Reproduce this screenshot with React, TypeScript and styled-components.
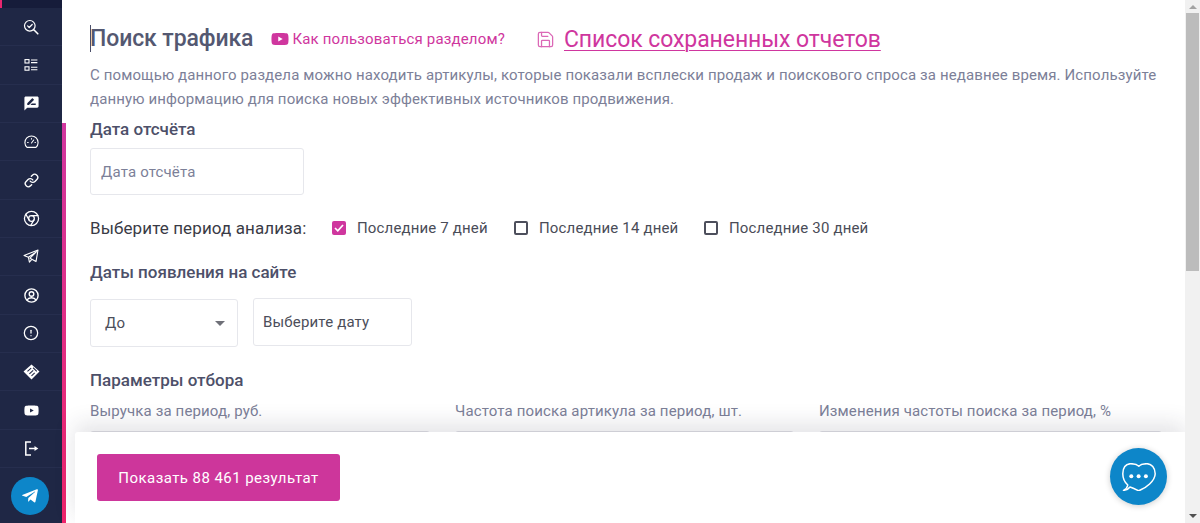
import React from "react";
import styled, { createGlobalStyle } from "styled-components";
import { FaTelegramPlane, FaYoutube } from "react-icons/fa";
import { MdRateReview } from "react-icons/md";
import { LuChrome, LuLink, LuSave, LuCircleAlert } from "react-icons/lu";

const Global = createGlobalStyle`
  html, body { margin: 0; padding: 0; height: 100%; overflow: hidden; background: #fff; }
  #root { height: 100%; }
  * { box-sizing: border-box; }
  body { font-family: Roboto, "Liberation Sans", sans-serif; }
`;

const Page = styled.div`
  position: relative;
  display: flex;
  width: 1200px;
  height: 523px;
  overflow: hidden;
`;
const Sidebar = styled.nav`
  width: 62px;
  flex: none;
  background: #1f2745;
  display: flex;
  flex-direction: column;
`;
const SideTop = styled.div`
  height: 8px;
  background: #161c3a;
  border-left: 2px solid #e8266f;
`;
const SideRow = styled.div`
  height: 38.35px;
  flex: none;
  display: flex;
  align-items: center;
  justify-content: center;
  color: #fff;
  border-bottom: 1px solid #262e4e;
  & > svg { display: block; }
`;
const TelegramRound = styled.div`
  width: 38px;
  height: 38px;
  border-radius: 50%;
  margin: 9px 0 0 11px;
  background: #0d86c9;
  display: flex;
  align-items: center;
  justify-content: center;
  color: #fff;
`;
const Accent = styled.div`
  width: 4px;
  flex: none;
  margin-top: 123px;
  background: linear-gradient(180deg, #d0369f 0%, #f0246b 100%);
`;
const Main = styled.main`
  flex: 1;
  min-width: 0;
  padding: 0 24px 0 24px;
  background: #fff;
`;
const TitleRow = styled.div`
  display: flex;
  align-items: center;
  height: 56px;
  padding-top: 22px;
`;
const Title = styled.h1`
  position: relative;
  margin: 0;
  font-size: 23px;
  line-height: 28px;
  font-weight: 500;
  letter-spacing: -0.1px;
  color: #545871;
  &::before {
    content: "";
    position: absolute;
    left: 0;
    top: 0;
    height: 27px;
    width: 1px;
    background: #4a4e69;
  }
`;
const Help = styled.a`
  display: flex;
  align-items: center;
  margin-left: 18px;
  color: #cf369e;
  font-size: 15px;
  font-weight: 400;
  letter-spacing: 0.17px;
  gap: 3px;
`;
const Reports = styled.a`
  display: flex;
  align-items: center;
  margin-left: 31px;
  color: #cf369e;
  font-size: 23px;
  letter-spacing: -0.08px;
  gap: 9px;
  span { text-decoration: underline; text-underline-offset: 3px; text-decoration-thickness: 1px; }
  svg { opacity: 0.75; }
`;
const Desc = styled.p`
  margin: 7px 0 0;
  font-size: 15px;
  line-height: 24px;
  letter-spacing: 0.12px;
  color: #7c8098;
  width: 1075px;
`;
const SectionLabel = styled.div<{ $top: number }>`
  margin-top: ${(p) => p.$top}px;
  font-size: 17px;
  line-height: 22px;
  font-weight: 500;
  color: #4d5069;
`;
const TextBox = styled.div<{ $w: number; $h: number; $dark?: boolean; $pad: number }>`
  width: ${(p) => p.$w}px;
  height: ${(p) => p.$h}px;
  border: 1px solid #e6e7ec;
  border-radius: 3px;
  padding: 0 ${(p) => p.$pad}px;
  display: flex;
  align-items: center;
  justify-content: space-between;
  font-size: 15px;
  letter-spacing: 0.17px;
  color: ${(p) => (p.$dark ? "#4c4e5a" : "#7c8098")};
  background: #fff;
`;
const FirstBox = styled.div`
  margin-top: 8px;
`;
const PeriodRow = styled.div`
  display: flex;
  align-items: center;
  margin-top: 22px;
  height: 22px;
`;
const PeriodLabel = styled.span`
  width: 242px;
  font-size: 17px;
  color: #3a3b46;
  letter-spacing: 0.1px;
`;
const Check = styled.label<{ $w: number }>`
  display: flex;
  align-items: center;
  width: ${(p) => p.$w}px;
  gap: 11px;
  font-size: 15px;
  letter-spacing: 0.16px;
  color: #4a4c58;
`;
const Box = styled.span<{ $on?: boolean }>`
  width: 14px;
  height: 14px;
  flex: none;
  border-radius: 2px;
  border: ${(p) => (p.$on ? "none" : "2px solid #4d4f5c")};
  background: ${(p) => (p.$on ? "#cf369e" : "#fff")};
  display: flex;
  align-items: center;
  justify-content: center;
`;
const DatesRow = styled.div`
  display: flex;
  align-items: flex-start;
  gap: 15px;
  margin-top: 16px;
`;
const DateSlot = styled.div`
  margin-top: -1px;
`;
const Caret = styled.span`
  width: 0;
  height: 0;
  border-left: 5px solid transparent;
  border-right: 5px solid transparent;
  border-top: 5px solid #6f7078;
  margin-right: -2px;
`;
const Params = styled.div`
  display: grid;
  grid-template-columns: 340px 339px 343px;
  column-gap: 25px;
  margin-top: 10px;
`;
const ParamLabel = styled.div`
  font-size: 15px;
  line-height: 20px;
  letter-spacing: 0.14px;
  color: #7c8098;
  white-space: nowrap;
  height: 20px;
`;
const ParamInput = styled.div`
  margin-top: 10px;
  height: 48px;
  border: 1px solid #e0e1e5;
  border-radius: 3px;
`;
const BottomBar = styled.div`
  position: absolute;
  left: 75px;
  right: 15px;
  bottom: 0;
  height: 91px;
  background: #fff;
  border-radius: 3px 0 0 0;
  box-shadow: 0 -8px 22px rgba(40, 40, 60, 0.13);
  padding: 22px 0 0 22px;
`;
const ShowButton = styled.button`
  width: 243px;
  height: 47px;
  border: none;
  border-radius: 3px;
  background: #cd369b;
  color: #fff;
  font-family: inherit;
  font-size: 15px;
  font-weight: 400;
  letter-spacing: 0.44px;
`;
const Chat = styled.div`
  position: absolute;
  left: 1110px;
  top: 448px;
  width: 57px;
  height: 57px;
  border-radius: 50%;
  background: #0d86c9;
  box-shadow: 0 1px 6px rgba(0, 0, 0, 0.2);
  display: flex;
  align-items: center;
  justify-content: center;
`;
const Scrollbar = styled.div`
  width: 15px;
  flex: none;
  background: #f1f1f1;
  display: flex;
  flex-direction: column;
  align-items: center;
  position: relative;
  z-index: 2;
`;
const ArrowUp = styled.span`
  margin-top: 5px;
  width: 0;
  height: 0;
  border-left: 4px solid transparent;
  border-right: 4px solid transparent;
  border-bottom: 4px solid #a3a3a3;
`;
const Thumb = styled.div`
  margin-top: 4px;
  width: 13px;
  height: 258px;
  background: #bcbcbc;
`;
const ArrowDown = styled.span`
  margin-top: auto;
  margin-bottom: 5px;
  width: 0;
  height: 0;
  border-left: 4px solid transparent;
  border-right: 4px solid transparent;
  border-top: 4px solid #505050;
`;

const SearchCheck = () => (
  <svg width="16" height="16" viewBox="0 0 16 16" fill="none" stroke="#fff" strokeWidth="1.2" strokeLinecap="round" strokeLinejoin="round">
    <circle cx="6.8" cy="6.8" r="5.3" />
    <path d="M4.6 6.9l1.6 1.6 3-3" />
    <path d="M10.8 10.8l4 4" strokeWidth="1.6" />
  </svg>
);
const ListIcon = () => (
  <svg width="14" height="14" viewBox="0 0 14 14" fill="none" stroke="#fff" strokeWidth="1.1">
    <rect x="1" y="1.6" width="4" height="3.4" />
    <rect x="1" y="8.8" width="4" height="3.4" />
    <path d="M7 2h6.4M7 4.6h6.4M7 9.2h6.4M7 11.8h6.4" />
  </svg>
);
const Gauge = () => (
  <svg width="15" height="14" viewBox="0 0 15 14" fill="none" stroke="#fff" strokeWidth="1.1" strokeLinecap="round">
    <path d="M3 12.4A6.6 6.6 0 1 1 12 12.4Z" strokeLinejoin="round" />
    <path d="M7.5 8l2.2-3M3.6 7.5h.6M11 7.5h.4M7.5 3.6v.5" />
  </svg>
);
const PlaneOutline = () => (
  <svg width="16" height="15" viewBox="0 0 16 15" fill="none" stroke="#fff" strokeWidth="1.1" strokeLinejoin="round">
    <path d="M15 1L1 6.4l4.4 1.8L13.600 2.600 7 9.200l6 3.400L15 1Z" />
    <path d="M5.400 8.200l1 5 2.400-2.900" />
  </svg>
);
const UserCircle = () => (
  <svg width="15" height="15" viewBox="0 0 15 15" fill="none" stroke="#fff" strokeWidth="1.4">
    <circle cx="7.5" cy="7.5" r="6.6" />
    <circle cx="7.5" cy="6" r="2.3" />
    <path d="M3 12c1-1.800 2.600-2.300 4.500-2.300S11 10.200 12 12" />
  </svg>
);
const HandDiamond = () => (
  <svg width="17" height="16" viewBox="0 0 16 15">
    <path d="M8 .5L15.500 7 8 14.500.5 7Z" fill="#fff" />
    <path d="M4.200 7l3.500-3.200M6 9.200l3.600-3.300M8 11.200l3-2.800M9.500 3.500L13 7" stroke="#1f2745" strokeWidth="1" fill="none" />
  </svg>
);
const LogoutIcon = () => (
  <svg width="15" height="15" viewBox="0 0 15 15" fill="none" stroke="#fff" strokeWidth="1.5">
    <path d="M7 1H1.800v13H7" />
    <path d="M5 7.500h6" />
    <path d="M10.500 5l3.800 2.500-3.800 2.500Z" fill="#fff" stroke="none" />
  </svg>
);
const ChatHeart = () => (
  <svg width="34" height="28" viewBox="0 0 34 28" fill="none">
    <path d="M16.800 3.300C14.500 1 11.500.7 8.500.7 3.500.7.800 5 .8 10.700.8 15.500 3 19.500 5.800 22 5.500 24 4 26 1.500 27.300 4 27.300 6.500 26 8 24c3 1 6 2.500 8.700 3.800C24 25 33 18 33.200 10.700 33.200 5 29.500.7 25 .7c-3 0-6 .3-8.200 2.600Z" stroke="#fff" strokeWidth="1.5" strokeLinejoin="round" />
    <circle cx="9.300" cy="13.300" r="2" fill="#fff" />
    <circle cx="16.600" cy="13.300" r="2" fill="#fff" />
    <circle cx="23.900" cy="13.300" r="2" fill="#fff" />
  </svg>
);

const navIcons = [
  <SearchCheck />,
  <ListIcon />,
  <MdRateReview size={17} />,
  <Gauge />,
  <LuLink size={15} strokeWidth={2.2} />,
  <LuChrome size={17} strokeWidth={1.8} />,
  <PlaneOutline />,
  <UserCircle />,
  <LuCircleAlert size={16} strokeWidth={1.9} />,
  <HandDiamond />,
  <FaYoutube size={15} />,
  <LogoutIcon />,
];

const periods = [
  { label: "Последние 7 дней", on: true, w: 182 },
  { label: "Последние 14 дней", on: false, w: 190 },
  { label: "Последние 30 дней", on: false, w: 180 },
];
const params = [
  "Выручка за период, руб.",
  "Частота поиска артикула за период, шт.",
  "Изменения частоты поиска за период, %",
];

export default function App() {
  return (
    <Page>
      <Global />
      <Sidebar>
        <SideTop />
        {navIcons.map((icon, i) => (
          <SideRow key={i}>{icon}</SideRow>
        ))}
        <TelegramRound>
          <FaTelegramPlane size={18} />
        </TelegramRound>
      </Sidebar>
      <Accent />
      <Main>
        <TitleRow>
          <Title>Поиск трафика</Title>
          <Help>
            <FaYoutube size={18} />
            Как пользоваться разделом?
          </Help>
          <Reports>
            <LuSave size={19} strokeWidth={1.6} />
            <span>Список сохраненных отчетов</span>
          </Reports>
        </TitleRow>
        <Desc>
          С помощью данного раздела можно находить артикулы, которые показали всплески продаж и поискового спроса за недавнее время. Используйте данную информацию для поиска новых эффективных источников продвижения.
        </Desc>
        <SectionLabel $top={7}>Дата отсчёта</SectionLabel>
        <FirstBox>
          <TextBox $w={214} $h={47} $pad={10}>Дата отсчёта</TextBox>
        </FirstBox>
        <PeriodRow>
          <PeriodLabel>Выберите период анализа:</PeriodLabel>
          {periods.map((p) => (
            <Check key={p.label} $w={p.w}>
              <Box $on={p.on}>
                {p.on && (
                  <svg width="10" height="8" viewBox="0 0 10 8" fill="none" stroke="#fff" strokeWidth="1.700">
                    <path d="M1 4l2.800 2.800L9 1" />
                  </svg>
                )}
              </Box>
              {p.label}
            </Check>
          ))}
        </PeriodRow>
        <SectionLabel $top={22}>Даты появления на сайте</SectionLabel>
        <DatesRow>
          <TextBox $w={148} $h={48} $pad={14} $dark>
            До
            <Caret />
          </TextBox>
          <DateSlot>
            <TextBox $w={159} $h={48} $pad={9} $dark>Выберите дату</TextBox>
          </DateSlot>
        </DatesRow>
        <SectionLabel $top={22}>Параметры отбора</SectionLabel>
        <Params>
          {params.map((t) => (
            <div key={t}>
              <ParamLabel>{t}</ParamLabel>
              <ParamInput />
            </div>
          ))}
        </Params>
      </Main>
      <Scrollbar>
        <ArrowUp />
        <Thumb />
        <ArrowDown />
      </Scrollbar>
      <BottomBar>
        <ShowButton>Показать 88 461 результат</ShowButton>
      </BottomBar>
      <Chat>
        <ChatHeart />
      </Chat>
    </Page>
  );
}
